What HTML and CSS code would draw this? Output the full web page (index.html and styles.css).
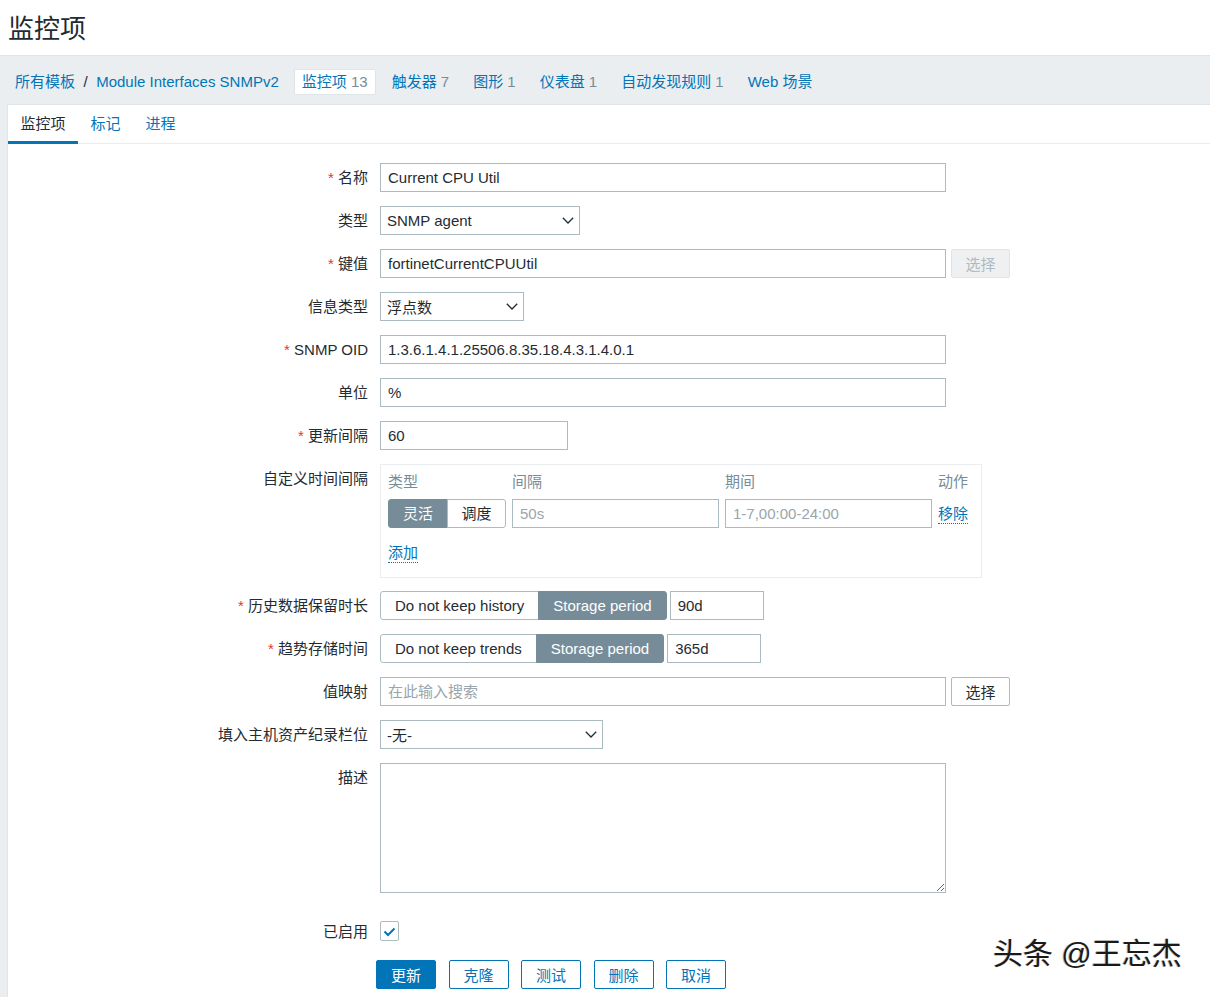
FILE: index.html
```html
<!DOCTYPE html>
<html lang="zh-CN">
<head>
<meta charset="utf-8">
<title>监控项</title>
<link rel="stylesheet" href="styles.css">
</head>
<body>
<header class="page-header"><h1 class="page-title">监控项</h1></header>
<div class="page-body">
  <nav class="breadcrumbs">
    <a class="crumb crumb-first" href="#">所有模板</a><span class="crumb-sep">/</span><a class="crumb crumb-host" href="#">Module Interfaces SNMPv2</a>
    <a class="crumb crumb-active" href="#">监控项 <span class="count">13</span></a>
    <a class="crumb" href="#">触发器 <span class="count">7</span></a>
    <a class="crumb" href="#">图形 <span class="count">1</span></a>
    <a class="crumb" href="#">仪表盘 <span class="count">1</span></a>
    <a class="crumb" href="#">自动发现规则 <span class="count">1</span></a>
    <a class="crumb" href="#">Web 场景</a>
  </nav>
  <main class="panel">
    <ul class="tabs">
      <li class="tab tab-active"><a href="#">监控项</a></li>
      <li class="tab"><a href="#">标记</a></li>
      <li class="tab"><a href="#">进程</a></li>
    </ul>
    <form class="item-form">
      <div class="row">
        <label class="lbl"><span class="req">*</span> 名称</label>
        <div class="field"><input class="input w-wide" type="text" value="Current CPU Util"></div>
      </div>
      <div class="row">
        <label class="lbl">类型</label>
        <div class="field"><div class="select w-type"><span>SNMP agent</span><svg class="chev" width="12" height="7" viewBox="0 0 12 7"><path d="M0.8 0.8L6 6L11.2 0.8" fill="none" stroke="#1f2c33" stroke-width="1.3"/></svg></div></div>
      </div>
      <div class="row">
        <label class="lbl"><span class="req">*</span> 键值</label>
        <div class="field"><input class="input w-wide" type="text" value="fortinetCurrentCPUUtil"><button class="btn-side btn-disabled" type="button">选择</button></div>
      </div>
      <div class="row">
        <label class="lbl">信息类型</label>
        <div class="field"><div class="select w-info"><span>浮点数</span><svg class="chev" width="12" height="7" viewBox="0 0 12 7"><path d="M0.8 0.8L6 6L11.2 0.8" fill="none" stroke="#1f2c33" stroke-width="1.3"/></svg></div></div>
      </div>
      <div class="row">
        <label class="lbl"><span class="req">*</span> SNMP OID</label>
        <div class="field"><input class="input w-wide" type="text" value="1.3.6.1.4.1.25506.8.35.18.4.3.1.4.0.1"></div>
      </div>
      <div class="row">
        <label class="lbl">单位</label>
        <div class="field"><input class="input w-wide" type="text" value="%"></div>
      </div>
      <div class="row">
        <label class="lbl"><span class="req">*</span> 更新间隔</label>
        <div class="field"><input class="input w-interval" type="text" value="60"></div>
      </div>
      <div class="row row-box">
        <label class="lbl">自定义时间间隔</label>
        <div class="field">
          <div class="interval-box">
            <div class="interval-grid">
              <div class="ih">类型</div>
              <div class="ih">间隔</div>
              <div class="ih">期间</div>
              <div class="ih">动作</div>
              <div class="toggle toggle-sm">
                <span class="tg tg-on">灵活</span><span class="tg">调度</span>
              </div>
              <input class="input w-full" type="text" placeholder="50s">
              <input class="input w-full" type="text" placeholder="1-7,00:00-24:00">
              <a class="dlink" href="#">移除</a>
            </div>
            <a class="dlink add-link" href="#">添加</a>
          </div>
        </div>
      </div>
      <div class="row">
        <label class="lbl"><span class="req">*</span> 历史数据保留时长</label>
        <div class="field">
          <div class="toggle"><span class="tg">Do not keep history</span><span class="tg tg-on">Storage period</span></div>
          <input class="input w-period" type="text" value="90d">
        </div>
      </div>
      <div class="row">
        <label class="lbl"><span class="req">*</span> 趋势存储时间</label>
        <div class="field">
          <div class="toggle"><span class="tg">Do not keep trends</span><span class="tg tg-on">Storage period</span></div>
          <input class="input w-period" type="text" value="365d">
        </div>
      </div>
      <div class="row">
        <label class="lbl">值映射</label>
        <div class="field"><input class="input w-wide" type="text" placeholder="在此输入搜索"><button class="btn-side" type="button">选择</button></div>
      </div>
      <div class="row">
        <label class="lbl">填入主机资产纪录栏位</label>
        <div class="field"><div class="select w-inv"><span>-无-</span><svg class="chev" width="12" height="7" viewBox="0 0 12 7"><path d="M0.8 0.8L6 6L11.2 0.8" fill="none" stroke="#1f2c33" stroke-width="1.3"/></svg></div></div>
      </div>
      <div class="row row-desc">
        <label class="lbl">描述</label>
        <div class="field"><textarea class="textarea"></textarea></div>
      </div>
      <div class="row row-check">
        <label class="lbl">已启用</label>
        <div class="field"><span class="checkbox"><svg width="17" height="17" viewBox="0 0 17 17"><path d="M3.5 8.5L7 12L13.5 5.5" fill="none" stroke="#0275b8" stroke-width="2"/></svg></span></div>
      </div>
      <div class="actions">
        <button class="btn btn-primary" type="button">更新</button>
        <button class="btn" type="button">克隆</button>
        <button class="btn" type="button">测试</button>
        <button class="btn" type="button">删除</button>
        <button class="btn" type="button">取消</button>
      </div>
    </form>
  </main>
</div>
<div class="watermark">头条 @王忘杰</div>
</body>
</html>
```

FILE: styles.css
```css
* { box-sizing: border-box; }
html, body { margin: 0; padding: 0; }
body {
  font-family: "Liberation Sans", Arial, "Noto Sans CJK SC", sans-serif;
  font-size: 15px;
  color: #1f2c33;
  background: #ebeef0;
  overflow: hidden;
}
.page-header {
  background: #fff;
  height: 56px;
  border-bottom: 1px solid #dfe4e7;
  padding-left: 8px;
  display: flex;
  align-items: center;
}
.page-title {
  margin: 2px 0 0 0;
  font-size: 26px;
  font-weight: normal;
  line-height: 1;
  color: #1f2c33;
}
.page-body { padding-left: 7px; }

.breadcrumbs {
  height: 48px;
  padding-top: 3px;
  display: flex;
  align-items: center;
  white-space: nowrap;
}
.crumb {
  color: #0275b8;
  text-decoration: none;
  padding: 0 7px;
  border: 1px solid transparent;
  line-height: 24px;
  border-radius: 2px;
  margin-left: 8px;
}
.crumb-first, .crumb-host { margin-left: 0; }
.crumb-sep { padding: 0 0.5px; color: #1f2c33; }
.crumb-active { background: #fff; border-color: #dfe4e7; margin-left: 7px; }
.count { color: #768d99; }

.panel {
  background: #fff;
  border-left: 1px solid #dfe4e7;
  border-top: 1px solid #dfe4e7;
  height: 893px;
}
.tabs {
  list-style: none;
  margin: 0;
  padding: 0;
  display: flex;
  border-bottom: 1px solid #ebeef0;
}
.tab { margin-bottom: -1px; }
.tab a {
  display: block;
  padding: 2px 12.5px 0;
  line-height: 34px;
  border-bottom: 3px solid transparent;
  color: #0275b8;
  text-decoration: none;
}
.tab-active a { color: #1f2c33; border-bottom-color: #0275b8; }

.item-form { padding-top: 19px; }
.row {
  display: flex;
  align-items: flex-start;
  margin-bottom: 14px;
}
.lbl {
  width: 360px;
  flex-shrink: 0;
  margin-right: 12px;
  text-align: right;
  line-height: 29px;
  white-space: nowrap;
}
.req { color: #e33734; }
.field { display: flex; align-items: center; }

.input {
  height: 29px;
  border: 1px solid #acbbc2;
  padding: 0 7px;
  font-family: inherit;
  font-size: 15px;
  color: #1f2c33;
  background: #fff;
  border-radius: 0;
  outline: none;
}
.input::placeholder { color: #9aa6ac; }
.w-wide { width: 566px; }
.w-interval { width: 188px; }
.w-period { width: 94px; margin-left: 3px; }
.w-full { width: 100%; }

.select {
  height: 29px;
  border: 1px solid #acbbc2;
  display: flex;
  align-items: center;
  justify-content: space-between;
  padding: 0 5px 0 6px;
  background: #fff;
}
.w-type { width: 200px; }
.w-info { width: 144px; }
.w-inv { width: 223px; }
.chev { display: block; }

.btn-side {
  height: 29px;
  width: 59px;
  margin-left: 5px;
  border: 1px solid #acbbc2;
  border-radius: 2px;
  background: #fff;
  color: #1f2c33;
  font-family: inherit;
  font-size: 15px;
  padding: 0;
}
.btn-disabled {
  background: #eef0f1;
  border-color: #dfe4e7;
  color: #acbbc2;
}

.row-box { margin-bottom: 13px; }
.interval-box {
  width: 602px;
  border: 1px solid #ebeef0;
  padding: 7px 12px 14px 7px;
}
.interval-grid {
  display: grid;
  grid-template-columns: 118px 207px 207px auto;
  column-gap: 6px;
  row-gap: 7px;
  align-items: center;
}
.ih { color: #768d99; line-height: 20px; }
.dlink {
  color: #0275b8;
  text-decoration: none;
  border-bottom: 1px dotted #0275b8;
  justify-self: start;
  line-height: 19px;
}
.add-link { display: inline-block; margin-top: 15px; }

.toggle { display: flex; }
.tg {
  height: 29px;
  line-height: 27px;
  border: 1px solid #acbbc2;
  padding: 0 14px;
  background: #fff;
  color: #1f2c33;
  white-space: nowrap;
}
.tg:first-child { border-radius: 3px 0 0 3px; }
.tg:last-child { border-radius: 0 3px 3px 0; margin-left: -1px; }
.tg-on { background: #768d99; border-color: #768d99; color: #fff; }
.toggle-sm .tg { width: 60px; padding: 0; text-align: center; }
.toggle-sm .tg:last-child { width: 59px; }

.textarea {
  width: 566px;
  height: 130px;
  border: 1px solid #acbbc2;
  font-family: inherit;
  font-size: 15px;
  padding: 4px 7px;
  outline: none;
  display: block;
}
.row-desc { margin-bottom: 28px; }
.row-check { margin-bottom: 18px; }
.row-check .lbl { line-height: 21px; }
.checkbox {
  width: 19px;
  height: 20px;
  border: 1px solid #acbbc2;
  border-radius: 2px;
  display: flex;
  align-items: center;
  justify-content: center;
}

.actions {
  padding-left: 368px;
  display: flex;
  gap: 12.5px;
}
.btn {
  height: 29px;
  width: 60px;
  border: 1px solid #0275b8;
  border-radius: 2px;
  background: #fff;
  color: #0275b8;
  font-family: inherit;
  font-size: 15px;
  padding: 0;
}
.btn-primary { background: #0275b8; color: #fff; }

.watermark {
  position: absolute;
  left: 993px;
  top: 936px;
  font-size: 30px;
  line-height: 36px;
  color: #1a1a1a;
  text-shadow: 1px 1px 0 #fff, -1px 0 0 #bbb;
  white-space: nowrap;
}
```
